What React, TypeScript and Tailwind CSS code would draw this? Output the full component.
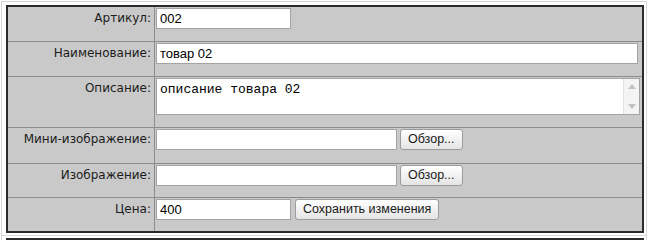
const LABEL = 'font-["DejaVu_Sans",Verdana,sans-serif] text-[12px] leading-[16px] text-[#1c1c1c]'
const INPUT = 'h-[21px] bg-white border border-[#a3a3a3] px-[3px] text-[13px] leading-[19px] text-black font-["Liberation_Sans",Arial,sans-serif]'
const BUTTON = 'h-[21px] rounded-[3px] border border-[#9c9c9c] bg-gradient-to-b from-white to-[#e4e4e4] px-[7px] text-[12.5px] leading-[19px] text-[#1a1a1a] font-["Liberation_Sans",Arial,sans-serif] shadow-[inset_0_1px_0_#fff]'

function Row({ label, height, last, children }: { label: string; height: string; last?: boolean; children: React.ReactNode }) {
  return (
    <div className={`flex ${height} ${last ? '' : 'border-b border-[#8c8c8c]'}`}>
      <div className={`w-[147px] shrink-0 border-r border-[#8c8c8c] pr-[3px] pt-[3px] text-right ${LABEL}`}>
        {label}
      </div>
      <div className="flex-1 pl-px pt-px pr-[2px]">{children}</div>
    </div>
  )
}

function ScrollBar() {
  return (
    <div className="flex w-[16px] flex-col items-center justify-between border-l border-[#e2e2e2] bg-[#f4f4f4] py-[5px]">
      <svg width="8" height="5" viewBox="0 0 8 5"><path d="M4 0 L8 5 L0 5 Z" fill="#c2c2c2" /></svg>
      <svg width="8" height="5" viewBox="0 0 8 5"><path d="M0 0 L8 0 L4 5 Z" fill="#c2c2c2" /></svg>
    </div>
  )
}

export default function App() {
  return (
    <div className="h-[240px] w-[650px] overflow-hidden bg-white">
      <div className="ml-px mt-px w-[646px] border-l border-r border-t border-[#d6d6d6] pb-[2px] pl-1 pt-[3px]">
        <div className="w-[638px] border-2 border-[#2b2b2b] bg-[#c9c9c9]">
          <Row label="Артикул:" height="h-[35px]">
            <div className={`w-[135px] ${INPUT}`}>002</div>
          </Row>
          <Row label="Наименование:" height="h-[35px]">
            <div className={`w-[482px] ${INPUT}`}>товар 02</div>
          </Row>
          <Row label="Описание:" height="h-[51px]">
            <div className="flex h-[37px] w-[484px] border border-[#a3a3a3] bg-white">
              <div className='flex-1 px-[3px] pt-[3px] text-[13px] leading-[15px] text-black font-["Liberation_Mono","Courier_New",monospace]'>
                описание товара 02
              </div>
              <ScrollBar />
            </div>
          </Row>
          <Row label="Мини-изображение:" height="h-[36px]">
            <div className="flex gap-[3px]">
              <div className={`w-[241px] ${INPUT}`} />
              <button className={BUTTON}>Обзор...</button>
            </div>
          </Row>
          <Row label="Изображение:" height="h-[34px]">
            <div className="flex gap-[3px]">
              <div className={`w-[241px] ${INPUT}`} />
              <button className={BUTTON}>Обзор...</button>
            </div>
          </Row>
          <Row label="Цена:" height="h-[33px]" last>
            <div className="flex gap-[4px]">
              <div className={`w-[135px] ${INPUT}`}>400</div>
              <button className={BUTTON}>Сохранить изменения</button>
            </div>
          </Row>
        </div>
      </div>
      <div className="ml-px w-[646px] border-l border-r border-t border-[#d6d6d6] pl-1 pt-[2px]">
        <div className="h-[20px] w-[638px] border-2 border-[#2b2b2b] bg-[#c9c9c9]" />
      </div>
    </div>
  )
}
